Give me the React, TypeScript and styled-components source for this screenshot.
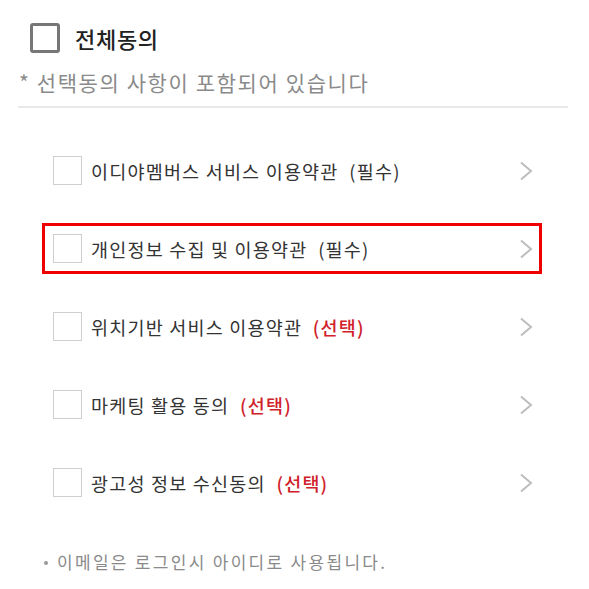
import React from "react";
import styled, { createGlobalStyle } from "styled-components";

const Global = createGlobalStyle`
  html, body { margin: 0; padding: 0; background: #fff; }
  body { font-family: "Noto Sans CJK KR", "Noto Sans", sans-serif; }
`;

const Page = styled.div`
  width: 589px;
  height: 589px;
  box-sizing: border-box;
  padding: 22px 21px 0 18px;
  display: flex;
  flex-direction: column;
`;

const Header = styled.div`
  display: flex;
  align-items: center;
  gap: 15px;
  padding-left: 12px;
  height: 31px;
`;

const BigBox = styled.span`
  width: 30px;
  height: 30px;
  box-sizing: border-box;
  border: 3px solid #777;
  border-radius: 3px;
  flex: none;
`;

const Title = styled.span`
  font-size: 22px;
  letter-spacing: 0.7px;
  line-height: 30px;
  font-weight: 500;
  color: #222;
`;

const Subtitle = styled.div`
  margin-top: 16px;
  font-size: 21px;
  letter-spacing: 1.6px;
  line-height: 26px;
  color: #8a8a8a;
  padding-left: 1px;
`;

const Divider = styled.div`
  margin-top: 11px;
  height: 2px;
  background: #e8e8e8;
`;

const List = styled.div`
  margin-top: 37px;
  margin-left: 24px;
  width: 500px;
  display: flex;
  flex-direction: column;
  gap: 27px;
`;

const Row = styled.div<{ $highlight?: boolean }>`
  height: 51px;
  box-sizing: border-box;
  display: flex;
  align-items: center;
  padding: 0 9px 0 11px;
  position: relative;
  &::after {
    content: "";
    position: absolute;
    inset: 0;
    border: 3px solid ${(p) => (p.$highlight ? "#ee0000" : "transparent")};
    pointer-events: none;
  }
`;

const SmallBox = styled.span`
  width: 29px;
  height: 29px;
  box-sizing: border-box;
  border: 1.5px solid #cfcfcf;
  flex: none;
`;

const Label = styled.span`
  margin-left: 9px;
  font-size: 18.5px;
  letter-spacing: 1.2px;
  line-height: 24px;
  color: #333;
  flex: 1;
  white-space: pre;
`;

const Tag = styled.span<{ $optional?: boolean }>`
  color: ${(p) => (p.$optional ? "#d0202a" : "#333")};
  font-weight: ${(p) => (p.$optional ? 500 : 400)};
`;

const Chevron = styled.svg`
  width: 14px;
  height: 20px;
  flex: none;
`;

const Note = styled.div`
  margin-top: 42px;
  display: flex;
  align-items: center;
  padding-left: 26px;
  font-size: 17px;
  letter-spacing: 2.3px;
  line-height: 24px;
  color: #8a8a8a;
`;

const Dot = styled.span`
  width: 4px;
  height: 4px;
  border-radius: 50%;
  background: #999;
  margin-right: 9px;
  margin-top: 2px;
`;

const items = [
  { text: "이디야멤버스 서비스 이용약관", tag: "(필수)", optional: false },
  { text: "개인정보 수집 및 이용약관", tag: "(필수)", optional: false, highlight: true },
  { text: "위치기반 서비스 이용약관", tag: "(선택)", optional: true },
  { text: "마케팅 활용 동의", tag: "(선택)", optional: true },
  { text: "광고성 정보 수신동의", tag: "(선택)", optional: true },
];

export default function App() {
  return (
    <>
      <Global />
      <Page>
        <Header>
          <BigBox />
          <Title>전체동의</Title>
        </Header>
        <Subtitle>* 선택동의 사항이 포함되어 있습니다</Subtitle>
        <Divider />
        <List>
          {items.map((it) => (
            <Row key={it.text} $highlight={it.highlight}>
              <SmallBox />
              <Label>
                {it.text}
                {"  "}
                <Tag $optional={it.optional}>{it.tag}</Tag>
              </Label>
              <Chevron viewBox="0 0 14 20">
                <polyline points="2,1.5 12,10 2,18.5" fill="none" stroke="#bdbdbd" strokeWidth="2" />
              </Chevron>
            </Row>
          ))}
        </List>
        <Note>
          <Dot />
          이메일은 로그인시 아이디로 사용됩니다.
        </Note>
      </Page>
    </>
  );
}
